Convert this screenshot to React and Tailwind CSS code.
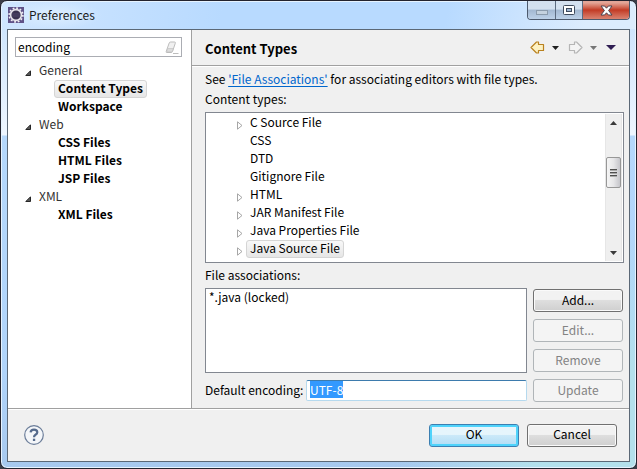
import { useEffect, useRef } from "react";

const preferenceGroups = [
  { name: "General", pages: ["Content Types", "Workspace"] },
  { name: "Web", pages: ["CSS Files", "HTML Files", "JSP Files"] },
  { name: "XML", pages: ["XML Files"] },
];

const contentTypes = [
  { name: "C Source File", expandable: true },
  { name: "CSS", expandable: false },
  { name: "DTD", expandable: false },
  { name: "Gitignore File", expandable: false },
  { name: "HTML", expandable: true },
  { name: "JAR Manifest File", expandable: true },
  { name: "Java Properties File", expandable: true },
  { name: "Java Source File", expandable: true },
];

const SELECTED = "rounded-[3px] border border-[#d5d5d5] bg-linear-to-b from-[#f8f8f8] to-[#e6e6e6]";

function EclipseLogo() {
  return (
    <svg width="16" height="16" viewBox="0 0 16 16" aria-hidden="true">
      <rect width="16" height="16" fill="#5f5288" />
      <circle cx="8" cy="8" r="6.900" fill="none" stroke="#f1eff4" strokeWidth="1.600" strokeDasharray="1.800 1.813" />
      <circle cx="8" cy="8" r="5.400" fill="#3a3350" stroke="#e6e4ea" strokeWidth="1.600" />
      <path d="M4 7h8M4 9h8" stroke="#544c70" strokeWidth="0.8" />
    </svg>
  );
}

function CaretDown({ fill }) {
  return (
    <svg width="7" height="4" viewBox="0 0 7 4" aria-hidden="true">
      <path d="M0 0h7L3.500 4z" fill={fill} />
    </svg>
  );
}

function NavArrow({ flip, stroke, fill }) {
  return (
    <svg width="15" height="13" viewBox="0 0 15 13" className={flip ? "-scale-x-100" : ""} aria-hidden="true">
      <path d="M6.500 1L1 6.500 6.500 12H8.500V9.500h5v-6h-5V1z" fill={fill} stroke={stroke} strokeWidth="1.200" strokeLinejoin="round" />
    </svg>
  );
}

function WindowControls() {
  const shade = "bg-linear-to-b from-[#d3e0ef] from-45% via-[#a3b8d1] via-50% to-[#bdd1e8]";
  return (
    <div className="flex h-[19px] overflow-hidden rounded-b-[4px] border border-t-0 border-[#4d5a6d]">
      <button aria-label="Minimize" className={`flex w-[28px] items-center justify-center border-r border-[#5c6b80] pt-1 ${shade}`}>
        <svg width="12" height="5" viewBox="0 0 12 5" aria-hidden="true">
          <rect x="0.5" y="0.5" width="11" height="4" fill="#c5d2df" stroke="#8b9bac" />
        </svg>
      </button>
      <button aria-label="Maximize" className={`flex w-[27px] items-center justify-center border-r border-[#5c6b80] ${shade}`}>
        <svg width="12" height="10" viewBox="0 0 12 10" aria-hidden="true">
          <rect x="0.5" y="0.5" width="11" height="9" rx="1" fill="#fff" stroke="#3e4a5c" />
          <rect x="3.5" y="3.5" width="5" height="3" fill="#9fb6d2" stroke="#3e4a5c" />
        </svg>
      </button>
      <button
        aria-label="Close"
        className="flex w-[46px] items-center justify-center bg-linear-to-b from-[#e3a597] from-10% via-[#c23a24] via-50% to-[#d98270]"
      >
        <svg width="13" height="11" viewBox="0 0 13 11" aria-hidden="true">
          <path
            d="M1 1h3.600l1.900 2.200L8.400 1H12L8.600 5.500 12 10H8.400L6.500 7.800 4.600 10H1l3.400-4.500z"
            fill="#fff"
            stroke="#4a4450"
            strokeLinejoin="round"
          />
        </svg>
      </button>
    </div>
  );
}

function PushButton({ children, disabled, primary }) {
  const look = disabled
    ? "border-[#b0b5b8] bg-[#f4f4f4] text-[#838383]"
    : primary
      ? "border-[#3c7fb1] bg-linear-to-b from-[#e6f5fc] from-45% via-[#cbe9f9] via-50% to-[#b1dcf5] shadow-[inset_0_0_0_2px_#4fd3fb]"
      : "border-[#707070] bg-linear-to-b from-[#f2f2f2] from-45% via-[#dedede] via-50% to-[#cfcfcf] shadow-[inset_0_0_0_1px_#fafafa]";
  return (
    <button disabled={disabled} className={`h-[23px] w-[90px] rounded-[3px] border pb-0.5 leading-[18px] ${look}`}>
      {children}
    </button>
  );
}

function Sidebar() {
  return (
    <aside className="w-[184px] shrink-0 border-r border-[#a0a0a0] bg-white pt-[7px] pr-[9px] pl-[7px]">
      <div className="flex h-5 items-center border border-[#abadb3] pr-0.5 pl-0.5">
        <input
          aria-label="Filter preferences"
          defaultValue="encoding"
          className="h-[18px] min-w-0 flex-1 pb-0.5 leading-[16px] outline-none"
        />
        <button aria-label="Clear filter">
          <svg width="14" height="13" viewBox="0 0 14 13" aria-hidden="true">
            <path d="M5.500 1h4q1.200 0 .8 1.200L7.500 10.500Q7 11.500 6 11.500H2Q.8 11.500 1.200 10.500L4.200 2q.4-1 1.300-1z" fill="#f0f0f0" stroke="#bdbdbd" />
            <path d="M2.600 7.500h5.600L7.200 11H1.600z" fill="#dcdcdc" stroke="#bdbdbd" strokeWidth="0.6" />
            <path d="M8 12.500h5.500" stroke="#bdbdbd" />
          </svg>
        </button>
      </div>
      <ul className="pt-[5px]">
        {preferenceGroups.map((group) => (
          <li key={group.name}>
            <div className="flex h-[18px] items-center pl-[10px]">
              <svg width="6" height="6" viewBox="0 0 6 6" className="mt-1 mr-2" aria-hidden="true">
                <path d="M5.500.8v4.700H.8z" fill="#595959" stroke="#262626" />
              </svg>
              <span className="h-[18px] leading-[16px] text-[#333]">{group.name}</span>
            </div>
            <ul>
              {group.pages.map((page) => (
                <li key={page} className="flex h-[18px] items-center pl-[39px] font-bold">
                  <span
                    className={`h-[18px] border px-[3px] leading-[14px] ${page === "Content Types" ? SELECTED : "border-transparent"}`}
                  >
                    {page}
                  </span>
                </li>
              ))}
            </ul>
          </li>
        ))}
      </ul>
    </aside>
  );
}

function ContentTypeTree() {
  return (
    <div className="flex h-[151px] border border-[#828790] bg-white p-px">
      <ul className="min-w-0 flex-1">
        {contentTypes.map((type) => (
          <li key={type.name} className="flex h-[18px] items-center pl-[30px]">
            <span className="flex w-[9px] pt-1">
              {type.expandable && (
                <svg width="6" height="9" viewBox="0 0 6 9" aria-hidden="true">
                  <path d="M.5.8v7.400L5 4.500z" fill="#fff" stroke="#a6a6a6" />
                </svg>
              )}
            </span>
            <span
              className={`h-[18px] border px-[3px] leading-[14px] ${type.name === "Java Source File" ? SELECTED : "border-transparent"}`}
            >
              {type.name}
            </span>
          </li>
        ))}
      </ul>
      <div className="flex w-[17px] flex-col items-center border-x border-[#e6e6e6] bg-[#efefef]">
        <button aria-label="Scroll up" className="flex h-[17px] items-center">
          <svg width="7" height="4" viewBox="0 0 7 4" aria-hidden="true">
            <path d="M0 4h7L3.500 0z" fill="#3a3a3a" />
          </svg>
        </button>
        <div className="mt-[26px] flex h-[31px] w-[15px] flex-col items-center justify-center gap-px rounded-[2px] border border-[#979797] bg-linear-to-r from-[#f5f5f5] via-[#e6e6e8] to-[#c6c6cb]">
          <span className="h-0.5 w-[7px] border-t border-[#4f4f4f] bg-[#a9a9a9]" />
          <span className="h-0.5 w-[7px] border-t border-[#4f4f4f] bg-[#a9a9a9]" />
          <span className="h-0.5 w-[7px] border-t border-[#4f4f4f] bg-[#a9a9a9]" />
        </div>
        <button aria-label="Scroll down" className="mt-auto flex h-[17px] items-center">
          <CaretDown fill="#3a3a3a" />
        </button>
      </div>
    </div>
  );
}

export default function App() {
  const encodingRef = useRef(null);

  useEffect(() => {
    encodingRef.current.focus();
    encodingRef.current.select();
  }, []);

  return (
    <div className="min-h-screen bg-[#3b3d48] font-['Noto_Sans_CJK_KR','Noto_Sans',sans-serif] text-[12px] text-black">
      <div className="flex min-h-screen flex-col rounded-[7px] border border-[#23232e] bg-[linear-gradient(100deg,#d0e6ff,#b8daff_35%,#b8daff_70%,#dcecfd_92%),radial-gradient(circle_at_100%_100%,#b3e0ec_100px,transparent_240px),linear-gradient(#cfe5fd_28px,#eef6ff_134px,#b5d8fc_135px,#b0d4fa_80%,#a6c8ee)] bg-[length:100%_28px,100%_100%,100%_100%] bg-no-repeat px-[6px] pb-[6px] shadow-[inset_0_0_0_1px_#e6f3ff]">
        <header className="flex h-7 items-start justify-between">
          <div className="flex h-7 items-center gap-[5px] bg-radial from-[#dceeff] to-transparent to-70% pl-px">
            <EclipseLogo />
            <h1 className="pr-2 pb-px leading-5 text-[#1b1b1b]">Preferences</h1>
          </div>
          <WindowControls />
        </header>

        <div className="flex flex-1 flex-col border border-[#5b6876] bg-[#f0f0f0]">
          <div className="flex flex-1">
            <Sidebar />
            <main className="min-w-0 flex-1">
              <div className="flex h-9 items-center justify-between border-b border-[#a0a0a0] pr-[13px] pl-[13px]">
                <h2 className="pt-0.5 text-[13px] leading-5 font-bold">Content Types</h2>
                <div className="flex items-center gap-[9px]">
                  <div className="flex items-center gap-[7px]">
                    <button aria-label="Back">
                      <NavArrow stroke="#b9811f" fill="#fdf1c2" />
                    </button>
                    <button aria-label="Back history">
                      <CaretDown fill="#1f1f1f" />
                    </button>
                  </div>
                  <div className="flex items-center gap-[7px]">
                    <button aria-label="Forward">
                      <NavArrow flip stroke="#b5b5b5" fill="#f4f4f4" />
                    </button>
                    <button aria-label="Forward history">
                      <CaretDown fill="#767676" />
                    </button>
                  </div>
                  <button aria-label="View menu">
                    <svg width="10" height="5" viewBox="0 0 10 5" aria-hidden="true">
                      <path d="M0 0h10L5 5z" fill="#2f1d52" />
                    </svg>
                  </button>
                </div>
              </div>

              <div className="border-t border-white pt-0.5 pr-[5px] pb-[6px] pl-[13px]">
                <p className="leading-5">
                  See{" "}
                  <a href="#file-associations" className="text-[#0066cc] underline underline-offset-2">
                    'File Associations'
                  </a>{" "}
                  for associating editors with file types.
                </p>
                <h3 className="mb-[3px] leading-5">Content types:</h3>
                <ContentTypeTree />
                <h3 className="mt-0.5 mb-[3px] leading-5">File associations:</h3>
                <div className="flex gap-[6px]">
                  <div className="flex min-w-0 flex-1 flex-col gap-[7px]">
                    <ul className="h-[85px] border border-[#828790] bg-white px-[3px]">
                      <li className="leading-[16px]">*.java (locked)</li>
                    </ul>
                    <div className="flex items-center justify-between gap-1">
                      <label htmlFor="encoding" className="w-[97px] shrink-0 pb-px leading-5 whitespace-nowrap">
                        Default encoding:
                      </label>
                      <input
                        id="encoding"
                        ref={encodingRef}
                        defaultValue="UTF-8"
                        className="h-[21px] min-w-0 flex-1 rounded-[2px] border border-[#b5d9ee] border-t-[#3d7bad] bg-white px-[3px] pb-0.5 leading-[15px] outline-none selection:bg-[#3399ff] selection:text-white"
                      />
                    </div>
                  </div>
                  <div className="flex flex-col gap-[7px] pt-px pr-px">
                    <PushButton>Add...</PushButton>
                    <PushButton disabled>Edit...</PushButton>
                    <PushButton disabled>Remove</PushButton>
                    <PushButton disabled>Update</PushButton>
                  </div>
                </div>
              </div>
            </main>
          </div>

          <footer className="flex h-[53px] items-center justify-between border-t border-[#a0a0a0] pr-3 pl-4 shadow-[inset_0_1px_0_#fff]">
            <button aria-label="Help">
              <svg width="20" height="20" viewBox="0 0 20 20" aria-hidden="true">
                <circle cx="10" cy="10" r="9.300" fill="#f4f6f9" stroke="#6b7d99" strokeWidth="1.200" />
                <path d="M6.600 7.400Q6.800 4.600 10 4.600t3.300 2.600q0 1.500-1.800 2.600Q10 10.700 10 12.200" fill="none" stroke="#556a8c" strokeWidth="2.200" />
                <rect x="8.900" y="13.700" width="2.300" height="2.300" fill="#556a8c" />
              </svg>
            </button>
            <div className="flex gap-2">
              <PushButton primary>OK</PushButton>
              <PushButton>Cancel</PushButton>
            </div>
          </footer>
        </div>
      </div>
    </div>
  );
}
